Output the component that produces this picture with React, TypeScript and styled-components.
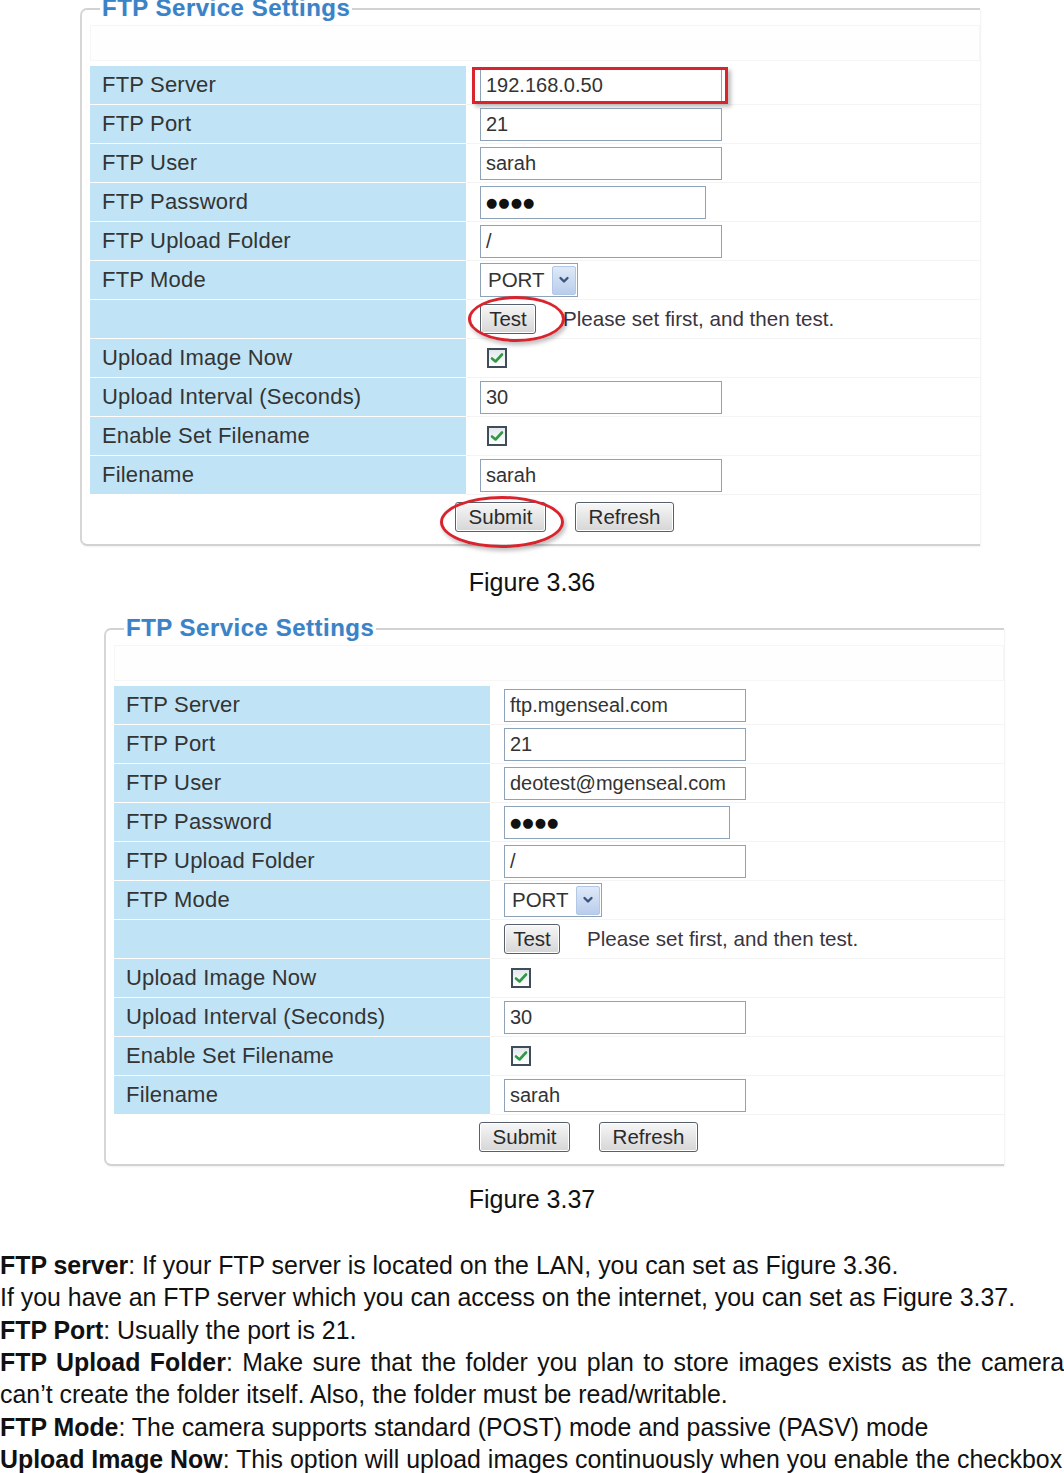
import React from 'react'
import styled, { createGlobalStyle } from 'styled-components'

const GlobalStyle = createGlobalStyle`
  html, body {
    margin: 0;
    padding: 0;
    background: #fff;
    overflow: hidden;
  }
  body {
    font-family: "Liberation Sans", Arial, sans-serif;
    color: #111;
  }
`

type Row =
  | { label: string; kind: 'text'; value: string; width?: number; mark?: boolean }
  | { label: string; kind: 'password'; width: number }
  | { label: string; kind: 'select'; value: string }
  | { label: string; kind: 'test' }
  | { label: string; kind: 'check' }

const buildRows = (server: string, user: string): Row[] => [
  { label: 'FTP Server', kind: 'text', value: server, mark: true },
  { label: 'FTP Port', kind: 'text', value: '21' },
  { label: 'FTP User', kind: 'text', value: user },
  { label: 'FTP Password', kind: 'password', width: 226 },
  { label: 'FTP Upload Folder', kind: 'text', value: '/' },
  { label: 'FTP Mode', kind: 'select', value: 'PORT' },
  { label: '', kind: 'test' },
  { label: 'Upload Image Now', kind: 'check' },
  { label: 'Upload Interval (Seconds)', kind: 'text', value: '30' },
  { label: 'Enable Set Filename', kind: 'check' },
  { label: 'Filename', kind: 'text', value: 'sarah' },
]

const CheckMark = () => (
  <svg width="14" height="12" viewBox="0 0 14 12">
    <path d="M2 6.5 L5.5 9.5 L12 2.5" fill="none" stroke="#2f9a45" strokeWidth="2.6" strokeLinecap="round" strokeLinejoin="round" />
  </svg>
)

const Chevron = () => (
  <svg width="12" height="10" viewBox="0 0 12 10">
    <path d="M2.5 3 L6 6.5 L9.5 3" fill="none" stroke="#3b557f" strokeWidth="2.4" strokeLinecap="round" strokeLinejoin="round" />
  </svg>
)

interface FigureProps {
  offset: number
  annotated?: boolean
  server: string
  user: string
}

const Figure = ({ offset, annotated, server, user }: FigureProps) => {
  const rows = buildRows(server, user)

  const renderValue = (row: Row) => {
    switch (row.kind) {
      case 'text':
        return (
          <FieldWrap>
            <Field $width={row.width ?? 242}>{row.value}</Field>
            {annotated && row.mark && <RedBox />}
          </FieldWrap>
        )
      case 'password':
        return <Field $width={row.width}><Dots>●●●●</Dots></Field>
      case 'select':
        return (
          <Select>
            <span>{row.value}</span>
            <SelectButton><Chevron /></SelectButton>
          </Select>
        )
      case 'test':
        return (
          <>
            <FieldWrap>
              <Button $width={56}>Test</Button>
              {annotated && <RedRing $left={-12} $top={-8} $w={97} $h={46} />}
            </FieldWrap>
            <Hint>Please set first, and then test.</Hint>
          </>
        )
      case 'check':
        return <Check><CheckMark /></Check>
    }
  }

  return (
    <Panel $offset={offset}>
      <Legend>FTP Service Settings</Legend>
      <TopStrip />
      {rows.map((row, i) => (
        <RowLine key={i}>
          <Label>{row.label}</Label>
          <Value>{renderValue(row)}</Value>
        </RowLine>
      ))}
      <Actions>
        <FieldWrap>
          <Button $width={91}>Submit</Button>
          {annotated && <RedRing $left={-15} $top={-6} $w={124} $h={52} />}
        </FieldWrap>
        <Button $width={99}>Refresh</Button>
      </Actions>
    </Panel>
  )
}

const App = () => (
  <>
    <GlobalStyle />
    <Page>
      <Figure offset={80} annotated server="192.168.0.50" user="sarah" />
      <Caption>Figure 3.36</Caption>
      <Figure offset={104} server="ftp.mgenseal.com" user="deotest@mgenseal.com" />
      <Caption $tight>Figure 3.37</Caption>
      <Body>
        <Para><b>FTP server</b>: If your FTP server is located on the LAN, you can set as Figure 3.36.</Para>
        <Para>If you have an FTP server which you can access on the internet, you can set as Figure 3.37.</Para>
        <Para><b>FTP Port</b>: Usually the port is 21.</Para>
        <Para $wrap>
          <b>FTP Upload Folder</b>: Make sure that the folder you plan to store images exists as the camera
          can’t create the folder itself. Also, the folder must be read/writable.
        </Para>
        <Para><b>FTP Mode</b>: The camera supports standard (POST) mode and passive (PASV) mode</Para>
        <Para><b>Upload Image Now</b>: This option will upload images continuously when you enable the checkbox</Para>
      </Body>
    </Page>
  </>
)

const Page = styled.div`
  width: 1064px;
  padding-top: 8px;
`

const Panel = styled.div<{ $offset: number }>`
  position: relative;
  width: 900px;
  box-sizing: border-box;
  margin-left: ${p => p.$offset}px;
  padding: 0 0 12px 8px;
  border-top: 2px solid #d2d2d2;
  border-left: 2px solid #d6d6d6;
  border-bottom: 2px solid #d2d2d2;
  border-radius: 7px 0 0 7px;
  box-shadow: 1px 1px 2px rgba(0, 0, 0, 0.06);
`

const Legend = styled.div`
  display: block;
  width: fit-content;
  margin: -15px 0 0 10px;
  padding: 0 2px;
  background: #fff;
  font-size: 24px;
  line-height: 26px;
  font-weight: 700;
  letter-spacing: 0.5px;
  color: #3b82c6;
  text-shadow: 0 0 1px rgba(59, 130, 198, 0.3);
`

const TopStrip = styled.div`
  height: 34px;
  margin: 4px 0 5px;
  border: 1px solid #f6f6f6;
  background: #fefefe;
`

const RowLine = styled.div`
  display: grid;
  grid-template-columns: 376px 1fr;
  height: 39px;
`

const Label = styled.div`
  display: flex;
  align-items: center;
  padding-left: 12px;
  background: #c0e4f6;
  border-bottom: 1px solid #fff;
  font-size: 22px;
  letter-spacing: 0.2px;
  color: #343434;
`

const Value = styled.div`
  display: flex;
  align-items: center;
  padding-left: 14px;
  border-bottom: 1px solid #f4f4f4;
  font-size: 20px;
`

const FieldWrap = styled.div`
  position: relative;
  display: flex;
`

const Field = styled.div<{ $width: number }>`
  width: ${p => p.$width}px;
  height: 33px;
  box-sizing: border-box;
  display: flex;
  align-items: center;
  padding-left: 5px;
  border: 1.5px solid #8ea3b8;
  background: #fff;
  color: #333;
  font-size: 20px;
`

const Dots = styled.span`
  font-family: "DejaVu Sans", sans-serif;
  font-size: 13px;
  letter-spacing: 1px;
  color: #111;
`

const Select = styled.div`
  width: 98px;
  height: 34px;
  box-sizing: border-box;
  display: flex;
  align-items: center;
  justify-content: space-between;
  padding: 0 1px 0 7px;
  border: 1.5px solid #8ea3b8;
  color: #333;
  font-size: 20.5px;
`

const SelectButton = styled.div`
  width: 24px;
  height: 29px;
  display: flex;
  align-items: center;
  justify-content: center;
  box-sizing: border-box;
  border: 1px solid #b3c8e6;
  border-radius: 2px;
  background: linear-gradient(#dfe9f8, #b9cdec);
`

const Button = styled.div<{ $width: number }>`
  width: ${p => p.$width}px;
  height: 30px;
  box-sizing: border-box;
  display: flex;
  align-items: center;
  justify-content: center;
  border: 1.5px solid #56606c;
  border-radius: 3px;
  background: linear-gradient(#f7f7f7, #e6e6e6 50%, #d6d6d6);
  box-shadow: inset 0 0 0 1px #fff;
  font-size: 20.5px;
  color: #2a2a2a;
`

const Hint = styled.span`
  margin-left: 27px;
  font-size: 20.6px;
  color: #3b3440;
`

const Check = styled.div`
  width: 20px;
  height: 20px;
  margin-left: 7px;
  box-sizing: border-box;
  display: flex;
  align-items: center;
  justify-content: center;
  border: 2px solid #3f4d5b;
  background: linear-gradient(#e4e8ec, #fff);
`

const Actions = styled.div`
  display: flex;
  gap: 29px;
  padding: 7px 0 0 365px;
`

const RedBox = styled.span`
  position: absolute;
  left: -8px;
  top: -2px;
  width: 256px;
  height: 37px;
  box-sizing: border-box;
  border: 3px solid #d9232d;
  box-shadow: 3px 3px 4px rgba(0, 0, 0, 0.25);
  pointer-events: none;
`

const RedRing = styled.span<{ $left: number; $top: number; $w: number; $h: number }>`
  position: absolute;
  left: ${p => p.$left}px;
  top: ${p => p.$top}px;
  width: ${p => p.$w}px;
  height: ${p => p.$h}px;
  box-sizing: border-box;
  border: 3px solid #d9232d;
  border-radius: 50%;
  box-shadow: 2px 3px 4px rgba(0, 0, 0, 0.25);
  pointer-events: none;
`

const Caption = styled.div<{ $tight?: boolean }>`
  margin-top: ${p => (p.$tight ? 18 : 21)}px;
  margin-bottom: ${p => (p.$tight ? 35 : 31)}px;
  text-align: center;
  font-size: 25px;
  line-height: 30px;
  color: #111;
`

const Body = styled.div`
  width: 1064px;
  font-size: 24.9px;
  line-height: 32.35px;
  color: #111;
`

const Para = styled.p<{ $wrap?: boolean }>`
  margin: 0;
  white-space: ${p => (p.$wrap ? 'normal' : 'nowrap')};
  text-align: ${p => (p.$wrap ? 'justify' : 'left')};
  b {
    font-weight: 700;
  }
`

export default App
